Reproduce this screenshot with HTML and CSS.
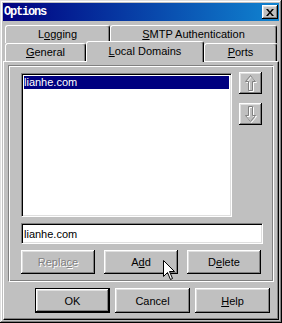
FILE: index.html
```html
<!DOCTYPE html>
<html>
<head>
  <title>Options</title>
  <link rel="stylesheet" href="styles.css">
</head>
<body>
  <div class="window">
    <div class="titlebar">
      <span class="title">Options</span>
      <button type="button" class="close">
        <svg width="8" height="7" viewBox="0 0 8 7"><path d="M0 0h2l2 2.5 2-2.5h2l-3 3.5 3 3.5h-2l-2-2.5-2 2.5h-2l3-3.5z" fill="#000"/></svg>
      </button>
    </div>

    <!-- Pestañas en dos filas -->
    <div class="tabs">
      <div class="tabrow">
        <div class="tab w-logging">L<u>o</u>gging</div>
        <div class="tab w-smtp"><u>S</u>MTP Authentication</div>
      </div>
      <div class="tabrow">
        <div class="tab w-general"><u>G</u>eneral</div>
        <div class="tab w-local active"><u>L</u>ocal Domains</div>
        <div class="tab w-ports"><u>P</u>orts</div>
      </div>
    </div>

    <div class="panel">
      <div class="frame">
        <div class="listrow">
          <div class="listbox">
            <div class="item selected">lianhe.com</div>
          </div>
          <div class="arrows">
            <button type="button" class="btn arrow">
              <svg width="12" height="17" viewBox="0 0 12 17"><path d="M6.5 1.5L11.5 7.5H8.5V16.5H4.5V7.5H1.5Z" fill="none" stroke="#fff"/><path d="M5.5 0.5L10.5 6.5H7.5V15.5H3.5V6.5H0.5Z" fill="none" stroke="#808080"/></svg>
            </button>
            <button type="button" class="btn arrow">
              <svg width="12" height="17" viewBox="0 0 12 17"><path d="M6.5 16.5L11.5 10.5H8.5V1.5H4.5V10.5H1.5Z" fill="none" stroke="#fff"/><path d="M5.5 15.5L10.5 9.5H7.5V0.5H3.5V9.5H0.5Z" fill="none" stroke="#808080"/></svg>
            </button>
          </div>
        </div>
        <input class="edit" type="text" value="lianhe.com">
        <div class="actions">
          <button type="button" class="btn disabled">Repla<u>c</u>e</button>
          <button type="button" class="btn">A<u>d</u>d</button>
          <button type="button" class="btn">D<u>e</u>lete</button>
        </div>
      </div>
      <div class="footer">
        <button type="button" class="btn default">OK</button>
        <button type="button" class="btn">Cancel</button>
        <button type="button" class="btn"><u>H</u>elp</button>
      </div>
    </div>

    <!-- Puntero del ratón encima del botón Add -->
    <svg class="cursor" width="13" height="20" viewBox="0 0 13 20"><path d="M0.5 0.5V16.5L4.5 12.5L7.5 19.5L9.5 18.5L6.5 11.5H11.5Z" fill="#fff" stroke="#000"/></svg>
  </div>
</body>
</html>
```

FILE: styles.css
```css
body {
  margin: 0;
  background: #c0c0c0;
  font-family: 'Liberation Sans', Arial, sans-serif;
  font-size: 11px;
  color: #000;
}
.window {
  position: relative;
  width: 282px;
  height: 323px;
  box-sizing: border-box;
  padding: 3px;
  background: #c0c0c0;
  box-shadow: inset -1px -1px #000, inset 1px 1px #dfdfdf, inset -2px -2px #808080, inset 2px 2px #fff;
  display: flex;
  flex-direction: column;
}
.titlebar {
  height: 18px;
  display: flex;
  align-items: center;
  justify-content: space-between;
  padding: 0 1px 0 1px;
  background: linear-gradient(90deg, #000080, #1084d0);
}
.title {
  color: #fff;
  font-family: 'Liberation Mono', monospace;
  font-weight: bold;
  font-size: 12px;
  letter-spacing: -1.2px;
}
.close {
  width: 16px;
  height: 14px;
  padding: 0;
  border: none;
  background: #c0c0c0;
  display: flex;
  align-items: center;
  justify-content: center;
  box-shadow: inset -1px -1px #000, inset 1px 1px #fff, inset -2px -2px #808080, inset 2px 2px #dfdfdf;
}
.tabs {
  margin-top: 4px;
  padding-left: 2px;
}
.tabrow {
  display: flex;
  height: 18px;
}
.tab {
  box-sizing: border-box;
  height: 18px;
  border-left: 1px solid #fff;
  border-top: 1px solid #fff;
  border-right: 1px solid #000;
  border-radius: 3px 3px 0 0;
  box-shadow: inset -1px 0 #808080;
  background: #c0c0c0;
  text-align: center;
  line-height: 17px;
}
.tab.active {
  position: relative;
  z-index: 1;
  height: 21px;
  margin-top: -2px;
  line-height: 18px;
}
.w-logging { width: 105px; }
.w-smtp { width: 167px; }
.w-general { width: 81px; }
.w-local { width: 118px; }
.w-ports { width: 73px; }
.panel {
  flex: 1;
  box-sizing: border-box;
  border: 1px solid;
  border-color: #fff #000 #000 #fff;
  box-shadow: inset -1px -1px #808080;
  padding: 3px 4px;
  display: flex;
  flex-direction: column;
}
.frame {
  box-sizing: border-box;
  height: 217px;
  border: 1px solid;
  border-color: #808080 #fff #fff #808080;
  box-shadow: inset 1px 1px #fff, inset -1px -1px #808080;
  padding: 7px 0 0 12px;
}
.listrow {
  display: flex;
}
.listbox {
  box-sizing: border-box;
  width: 211px;
  height: 144px;
  background: #fff;
  border: 1px solid;
  border-color: #808080 #fff #fff #808080;
  box-shadow: inset 1px 1px #000, inset -1px -1px #dfdfdf;
  padding: 2px;
}
.item {
  height: 13px;
  line-height: 13px;
}
.item.selected {
  background: #000080;
  color: #fff;
}
.arrows {
  margin-left: 7px;
  margin-top: -1px;
  display: flex;
  flex-direction: column;
  gap: 9px;
}
.btn {
  box-sizing: border-box;
  border: none;
  padding: 0;
  background: #c0c0c0;
  font-family: 'Liberation Sans', Arial, sans-serif;
  font-size: 11px;
  color: #000;
  box-shadow: inset -1px -1px #000, inset 1px 1px #fff, inset -2px -2px #808080, inset 2px 2px #dfdfdf;
}
.btn.arrow {
  width: 23px;
  height: 22px;
  display: flex;
  align-items: center;
  justify-content: center;
}
.btn.disabled {
  color: #808080;
  text-shadow: 1px 1px #fff;
}
.btn.default {
  border: 1px solid #000;
}
.edit {
  display: block;
  box-sizing: border-box;
  width: 242px;
  height: 21px;
  margin-top: 6px;
  border: 1px solid;
  border-color: #808080 #fff #fff #808080;
  box-shadow: inset 1px 1px #000, inset -1px -1px #dfdfdf;
  padding: 0 2px;
  font-family: 'Liberation Sans', Arial, sans-serif;
  font-size: 11px;
  outline: none;
}
.actions {
  display: flex;
  gap: 9px;
  margin-top: 6px;
}
.actions .btn {
  width: 74px;
  height: 24px;
}
.footer {
  display: flex;
  justify-content: flex-end;
  gap: 5px;
  margin-top: 6px;
  padding-right: 4px;
}
.footer .btn {
  width: 75px;
  height: 25px;
}
.cursor {
  position: absolute;
  left: 163px;
  top: 260px;
}
```
